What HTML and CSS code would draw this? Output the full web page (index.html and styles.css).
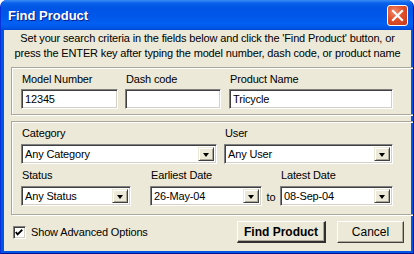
FILE: index.html
```html
<!DOCTYPE html>
<html>
<head>
<meta charset="utf-8">
<link rel="stylesheet" href="styles.css">
</head>
<body>
<div class="window">
  <div class="titlebar">
    <span class="title">Find Product</span>
    <div class="close"><svg width="13" height="13" viewBox="0 0 13 13"><path d="M2 2 L11 11 M11 2 L2 11" stroke="#fff" stroke-width="2.2" stroke-linecap="square"/></svg></div>
  </div>
  <div class="client">
    <div class="intro">Set your search criteria in the fields below and click the 'Find Product' button, or<br>press the ENTER key after typing the model number, dash code, or product name</div>

    <div class="group g1">
      <div class="field w-model">
        <div class="label">Model Number</div>
        <div class="edit">12345</div>
      </div>
      <div class="field w-dash">
        <div class="label">Dash code</div>
        <div class="edit"></div>
      </div>
      <div class="field w-name">
        <div class="label">Product Name</div>
        <div class="edit">Tricycle</div>
      </div>
    </div>

    <div class="group g2">
      <div class="row">
        <div class="field w-cat">
          <div class="label">Category</div>
          <div class="combo"><span class="ctext">Any Category</span><span class="arrow"><i></i></span></div>
        </div>
        <div class="field w-user">
          <div class="label">User</div>
          <div class="combo"><span class="ctext">Any User</span><span class="arrow"><i></i></span></div>
        </div>
      </div>
      <div class="row row2">
        <div class="field w-status">
          <div class="label">Status</div>
          <div class="combo"><span class="ctext">Any Status</span><span class="arrow"><i></i></span></div>
        </div>
        <div class="field w-early">
          <div class="label">Earliest Date</div>
          <div class="combo"><span class="ctext">26-May-04</span><span class="arrow"><i></i></span></div>
        </div>
        <div class="to">to</div>
        <div class="field w-late">
          <div class="label">Latest Date</div>
          <div class="combo"><span class="ctext">08-Sep-04</span><span class="arrow"><i></i></span></div>
        </div>
      </div>
    </div>

    <div class="footer">
      <div class="check"><svg width="13" height="13" viewBox="0 0 13 13"><path d="M3 6 L5 8.5 L10 3.5" fill="none" stroke="#000" stroke-width="2"/></svg></div>
      <span class="checklabel">Show Advanced Options</span>
      <div class="spacer"></div>
      <div class="btn default">Find Product</div>
      <div class="btn cancel">Cancel</div>
    </div>
  </div>
</div>
</body>
</html>
```

FILE: styles.css
```css
html, body {
  margin: 0;
  padding: 0;
}
body {
  width: 414px;
  height: 254px;
  overflow: hidden;
  font-family: Tahoma, "Liberation Sans", Arial, sans-serif;
  font-size: 11px;
  letter-spacing: -0.15px;
  color: #000;
  background: #fff;
}
.window {
  width: 414px;
  height: 254px;
  box-sizing: border-box;
  display: flex;
  flex-direction: column;
  background: #0055e5;
  border-left: 1px solid #0831d9;
  border-right: 1px solid #00138c;
  border-bottom: 1px solid #00138c;
  border-radius: 7px 7px 0 0;
  overflow: hidden;
}
.titlebar {
  height: 30px;
  flex: none;
  display: flex;
  align-items: center;
  padding: 0 5px 0 7px;
  background: linear-gradient(to bottom, #3c8cf7 0px, #0a62ea 3px, #0055e5 8px, #0056e8 14px, #0260f2 24px, #0056e6 28px, #0046d3 30px);
}
.title {
  flex: 1;
  color: #fff;
  font-family: "Liberation Sans", Arial, sans-serif;
  font-weight: bold;
  font-size: 13px;
  letter-spacing: 0;
  text-shadow: 1px 1px 0 #0a1e8c;
  padding-top: 1px;
}
.close {
  width: 19px;
  height: 19px;
  border: 1px solid #fff;
  border-radius: 3px;
  background: radial-gradient(circle at 35% 30%, #f08a6a 0%, #e2502a 45%, #c5381a 100%);
  display: flex;
  align-items: center;
  justify-content: center;
  margin-top: 1px;
}
.client {
  flex: 1;
  margin: 0 2px 2px 3px;
  background: #ece9d8;
  display: flex;
  flex-direction: column;
}
.intro {
  padding-top: 1px;
  line-height: 15px;
  text-align: center;
}
.group {
  margin: 6px 0 0 7px;
  width: 390px;
  border: 1px solid #aca899;
  box-shadow: 1px 1px 0 #fff, inset 1px 1px 0 #fff;
}
.g1 {
  display: flex;
  gap: 7px;
  padding: 5px 9px 5px 9px;
}
.g1 .w-name { margin-left: 1px; }
.g2 {
  padding: 5px 9px 8px 9px;
}
.row {
  display: flex;
}
.row2 {
  margin-top: 5px;
}
.field {
  display: flex;
  flex-direction: column;
}
.label {
  height: 13px;
  line-height: 13px;
  margin-left: 1px;
}
.w-model { width: 97px; }
.w-dash { width: 96px; }
.w-name { width: 164px; }
.w-cat { width: 196px; }
.w-user { width: 169px; margin-left: 7px; }
.w-status { width: 110px; }
.w-early { width: 112px; margin-left: 19px; }
.w-late { width: 113px; }
.edit, .combo {
  box-sizing: border-box;
  height: 20px;
  background: #fff;
  border-top: 1px solid #808080;
  border-left: 1px solid #808080;
  border-bottom: 1px solid #fff;
  border-right: 1px solid #fff;
  box-shadow: inset 1px 1px 0 #404040, inset -1px -1px 0 #d4d0c8;
}
.edit {
  margin-top: 3px;
  padding: 0 3px;
  line-height: 18px;
}
.combo {
  margin-top: 4px;
  display: flex;
  padding: 2px;
}
.ctext {
  flex: 1;
  line-height: 14px;
  padding-left: 1px;
  white-space: nowrap;
  overflow: hidden;
}
.arrow {
  width: 16px;
  box-sizing: border-box;
  background: #ece9d8;
  border-top: 1px solid #ece9d8;
  border-left: 1px solid #ece9d8;
  border-right: 1px solid #404040;
  border-bottom: 1px solid #404040;
  box-shadow: inset 1px 1px 0 #fff, inset -1px -1px 0 #aca899;
  display: flex;
  align-items: center;
  justify-content: center;
}
.arrow i {
  width: 0;
  height: 0;
  border-left: 3.5px solid transparent;
  border-right: 3.5px solid transparent;
  border-top: 4px solid #000;
  margin-top: 1px;
}
.to {
  width: 18px;
  display: flex;
  align-items: flex-end;
  justify-content: center;
  padding-bottom: 3px;
  box-sizing: border-box;
}
.footer {
  margin-top: 6px;
  height: 22px;
  display: flex;
  align-items: center;
  padding: 0 7px 0 9px;
}
.check {
  width: 13px;
  height: 13px;
  box-sizing: border-box;
  background: #fff;
  border-top: 1px solid #808080;
  border-left: 1px solid #808080;
  border-bottom: 1px solid #fff;
  border-right: 1px solid #fff;
  box-shadow: inset 1px 1px 0 #404040, inset -1px -1px 0 #d4d0c8;
  display: flex;
}
.check svg {
  margin: -1px 0 0 -1px;
}
.checklabel {
  margin-left: 5px;
}
.spacer { flex: 1; }
.btn {
  height: 22px;
  box-sizing: border-box;
  display: flex;
  align-items: center;
  justify-content: center;
  background: #ece9d8;
  border-top: 1px solid #fff;
  border-left: 1px solid #fff;
  border-right: 1px solid #404040;
  border-bottom: 1px solid #404040;
  box-shadow: inset -1px -1px 0 #aca899;
  letter-spacing: 0;
}
.default {
  width: 89px;
  font-weight: bold;
  font-size: 12px;
  border-right-width: 2px;
  border-bottom-width: 2px;
  border-right-color: #303030;
  border-bottom-color: #303030;
}
.cancel {
  width: 67px;
  margin-left: 11px;
  font-size: 12px;
}
```
